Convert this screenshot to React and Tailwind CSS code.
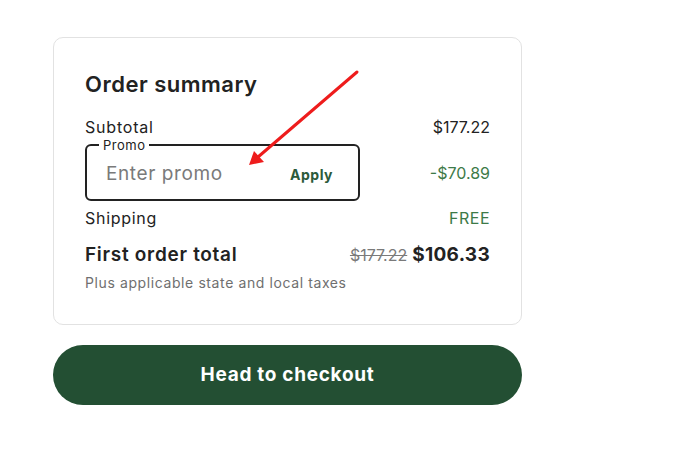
export default function App() {
  return (
    <div className="relative w-[695px] h-[467px] bg-white" style={{ fontFamily: "Inter, 'Noto Sans', sans-serif" }}>
      <div className="pl-[53px] pt-[37px] w-[522px]">
        <div className="border border-[#e2e2e2] rounded-[10px] px-[31px] pt-[32px] pb-[32px] text-[#222222]">
          <h2 className="text-[22px] leading-[28px] font-semibold tracking-[0.5px]">Order summary</h2>

          <div className="mt-[17px] flex justify-between text-[16px] leading-[24px]">
            <span className="tracking-[0.8px]">Subtotal</span>
            <span>$177.22</span>
          </div>

          <div className="mt-[5px] flex items-center justify-between">
            <div className="relative w-[275px] h-[57px] border-2 border-[#222222] rounded-[6px] flex items-center pl-[19px] pr-[25px] pt-[3px]">
              <span className="absolute -top-[9px] left-[12px] bg-white px-[4px] text-[13px] leading-[16px] tracking-[0.5px] text-[#222222]">Promo</span>
              <span className="flex-1 text-[19px] tracking-[0.6px] text-[#7a7a7a]">Enter promo</span>
              <span className="text-[14px] font-bold tracking-[0.5px] text-[#2c5a3a]">Apply</span>
            </div>
            <span className="text-[16px] text-[#3d7a48]">-$70.89</span>
          </div>

          <div className="mt-[5px] flex justify-between text-[16px] leading-[24px]">
            <span className="tracking-[0.7px]">Shipping</span>
            <span className="text-[#3d7a48] tracking-[0.5px]">FREE</span>
          </div>

          <div className="mt-[11px] flex justify-between items-center leading-[28px]">
            <span className="text-[19px] font-semibold tracking-[0.7px]">First order total</span>
            <span className="flex items-baseline gap-[5px]">
              <span className="text-[16px] text-[#7a7a7a] line-through">$177.22</span>
              <span className="text-[19px] font-bold tracking-[0.3px]">$106.33</span>
            </span>
          </div>

          <p className="mt-[5px] text-[14px] leading-[18px] tracking-[0.6px] text-[#6f6f6f]">Plus applicable state and local taxes</p>
        </div>

        <button className="mt-[20px] w-full h-[60px] rounded-full bg-[#234f33] text-white text-[19px] font-bold tracking-[0.7px]">
          Head to checkout
        </button>
      </div>

      <svg className="absolute left-0 top-0 pointer-events-none" width="695" height="467">
        <line x1="357" y1="72" x2="258" y2="157" stroke="#ee1c1c" strokeWidth="3" strokeLinecap="round" />
        <polygon points="249,165 254,151 264,162" fill="#ee1c1c" />
      </svg>
    </div>
  );
}
